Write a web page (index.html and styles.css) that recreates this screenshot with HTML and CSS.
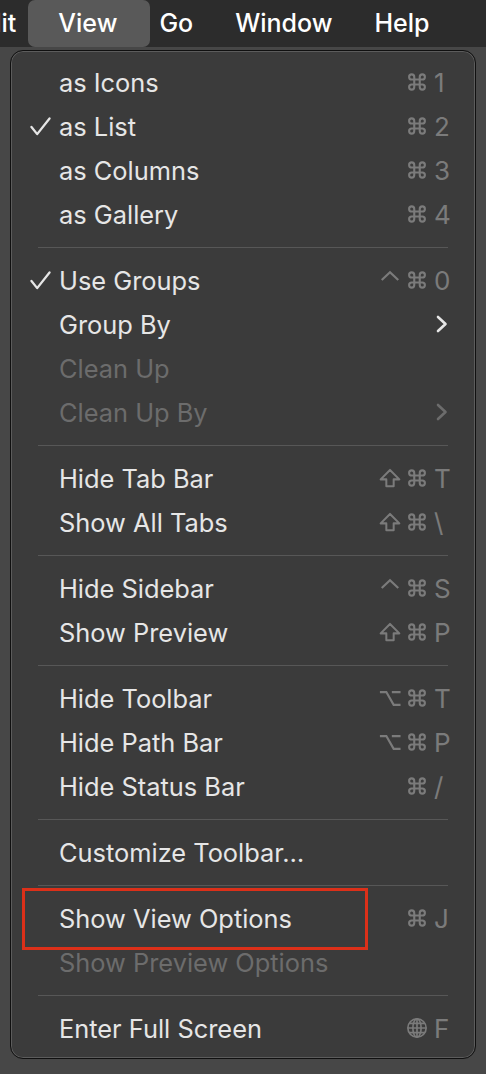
FILE: index.html
```html
<!DOCTYPE html>
<html>
<head>
<meta charset="utf-8">
<link rel="stylesheet" href="styles.css">
</head>
<body>
<svg width="0" height="0" class="defs">
  <defs>
    <symbol id="cmd" viewBox="0 0 24 24"><path d="M15 6.5v11a2.8 2.8 0 1 0 2.8-2.8H6.2a2.8 2.8 0 1 0 2.8 2.8V6.5a2.8 2.8 0 1 0-2.8 2.8h11.6a2.8 2.8 0 1 0-2.8-2.8" fill="none" stroke="currentColor" stroke-width="2.3"/></symbol>
    <symbol id="shift" viewBox="0 0 24 24"><path d="M8 21v-7.5H1.8L12 3.2l10.2 10.3H16V21z" fill="none" stroke="currentColor" stroke-width="2.2" stroke-linejoin="round"/></symbol>
    <symbol id="ctrl" viewBox="0 0 24 24"><polyline points="3,12 12,3.5 21,12" fill="none" stroke="currentColor" stroke-width="2.4"/></symbol>
    <symbol id="opt" viewBox="0 0 24 24"><path d="M1 5.5h7l8 14h7.5M14 5.5h9.5" fill="none" stroke="currentColor" stroke-width="2.4"/></symbol>
    <symbol id="globe" viewBox="0 0 24 24"><g fill="none" stroke="currentColor" stroke-width="1.8"><circle cx="12" cy="12" r="10"/><ellipse cx="12" cy="12" rx="4.5" ry="10"/><path d="M12 2v20M2 12h20M3.5 7h17M3.5 17h17"/></g></symbol>
  </defs>
</svg>

<div class="menubar">
  <span class="mb-item mb-edit">Edit</span>
  <span class="mb-item mb-active">View</span>
  <span class="mb-item">Go</span>
  <span class="mb-item">Window</span>
  <span class="mb-item">Help</span>
</div>

<div class="menu">
  <div class="item"><span class="label">as Icons</span><span class="sc"><span class="slot"></span><span class="slot"><svg class="ic"><use href="#cmd"/></svg></span><span class="key">1</span></span></div>
  <div class="item"><svg class="check" viewBox="0 0 22 20"><polyline points="1.5,10.5 7.5,18 20.5,1.5"/></svg><span class="label">as List</span><span class="sc"><span class="slot"></span><span class="slot"><svg class="ic"><use href="#cmd"/></svg></span><span class="key">2</span></span></div>
  <div class="item"><span class="label">as Columns</span><span class="sc"><span class="slot"></span><span class="slot"><svg class="ic"><use href="#cmd"/></svg></span><span class="key">3</span></span></div>
  <div class="item"><span class="label">as Gallery</span><span class="sc"><span class="slot"></span><span class="slot"><svg class="ic"><use href="#cmd"/></svg></span><span class="key">4</span></span></div>
  <div class="sep"></div>
  <div class="item"><svg class="check" viewBox="0 0 22 20"><polyline points="1.5,10.5 7.5,18 20.5,1.5"/></svg><span class="label">Use Groups</span><span class="sc"><span class="slot"><svg class="ic"><use href="#ctrl"/></svg></span><span class="slot"><svg class="ic"><use href="#cmd"/></svg></span><span class="key">0</span></span></div>
  <div class="item"><span class="label">Group By</span><svg class="chev" viewBox="0 0 12 18"><polyline points="2,2 9.5,9 2,16"/></svg></div>
  <div class="item disabled"><span class="label">Clean Up</span></div>
  <div class="item disabled"><span class="label">Clean Up By</span><svg class="chev" viewBox="0 0 12 18"><polyline points="2,2 9.5,9 2,16"/></svg></div>
  <div class="sep"></div>
  <div class="item"><span class="label">Hide Tab Bar</span><span class="sc"><span class="slot"><svg class="ic"><use href="#shift"/></svg></span><span class="slot"><svg class="ic"><use href="#cmd"/></svg></span><span class="key">T</span></span></div>
  <div class="item"><span class="label">Show All Tabs</span><span class="sc"><span class="slot"><svg class="ic"><use href="#shift"/></svg></span><span class="slot"><svg class="ic"><use href="#cmd"/></svg></span><span class="key">\</span></span></div>
  <div class="sep"></div>
  <div class="item"><span class="label">Hide Sidebar</span><span class="sc"><span class="slot"><svg class="ic"><use href="#ctrl"/></svg></span><span class="slot"><svg class="ic"><use href="#cmd"/></svg></span><span class="key">S</span></span></div>
  <div class="item"><span class="label">Show Preview</span><span class="sc"><span class="slot"><svg class="ic"><use href="#shift"/></svg></span><span class="slot"><svg class="ic"><use href="#cmd"/></svg></span><span class="key">P</span></span></div>
  <div class="sep"></div>
  <div class="item"><span class="label">Hide Toolbar</span><span class="sc"><span class="slot"><svg class="ic"><use href="#opt"/></svg></span><span class="slot"><svg class="ic"><use href="#cmd"/></svg></span><span class="key">T</span></span></div>
  <div class="item"><span class="label">Hide Path Bar</span><span class="sc"><span class="slot"><svg class="ic"><use href="#opt"/></svg></span><span class="slot"><svg class="ic"><use href="#cmd"/></svg></span><span class="key">P</span></span></div>
  <div class="item"><span class="label">Hide Status Bar</span><span class="sc"><span class="slot"></span><span class="slot"><svg class="ic"><use href="#cmd"/></svg></span><span class="key">/</span></span></div>
  <div class="sep"></div>
  <div class="item"><span class="label">Customize Toolbar…</span></div>
  <div class="sep"></div>
  <div class="item highlight"><span class="label">Show View Options</span><span class="sc"><span class="slot"></span><span class="slot"><svg class="ic"><use href="#cmd"/></svg></span><span class="key">J</span></span></div>
  <div class="item disabled"><span class="label">Show Preview Options</span></div>
  <div class="sep"></div>
  <div class="item"><span class="label">Enter Full Screen</span><span class="sc"><span class="slot"></span><span class="slot"><svg class="ic"><use href="#globe"/></svg></span><span class="key">F</span></span></div>
</div>
</body>
</html>
```

FILE: styles.css
```css
*, *::before, *::after { box-sizing: border-box; }
html, body {
  margin: 0;
  padding: 0;
  background: #474747;
  overflow: hidden;
  font-family: Inter, "Noto Sans", sans-serif;
}
.defs { position: absolute; }

.menubar {
  height: 47px;
  background: #2c2c2c;
  display: flex;
  align-items: center;
  gap: 42px;
  color: #ffffff;
  font-size: 25px;
  font-weight: 500;
  white-space: nowrap;
}
.mb-item { position: relative; line-height: 47px; }
.mb-edit { margin-left: -29px; }
.mb-active::before {
  content: "";
  position: absolute;
  left: -30px;
  right: -33px;
  top: 0;
  bottom: 0;
  background: #595959;
  border-radius: 7px;
  z-index: -1;
}
.mb-active { z-index: 0; }

.menu {
  margin: 3px 0 0 10px;
  width: 466px;
  background: #3b3b3b;
  border: 1px solid #101010;
  border-radius: 13px;
  box-shadow: inset 0 0 0 1px #5c5c5c;
  padding: 10px 0 7px;
  color: #e6e6e6;
  font-size: 25.4px;
}
.item {
  position: relative;
  height: 44px;
  display: flex;
  align-items: center;
  padding: 0 26px 2px 48px;
}
.label { flex: 1; white-space: nowrap; }
.disabled { color: #6c6c6c; }

.check {
  position: absolute;
  left: 19px;
  top: 12px;
  width: 21px;
  height: 19px;
  fill: none;
  stroke: #e6e6e6;
  stroke-width: 2.4;
  stroke-linecap: round;
  stroke-linejoin: round;
}

.sc {
  display: flex;
  align-items: center;
  color: #7b7b7b;
  font-size: 26px;
}
.slot {
  width: 27px;
  height: 22px;
  display: flex;
  align-items: center;
  justify-content: center;
}
.ic { width: 22px; height: 22px; }
.key {
  width: 19px;
  padding-left: 4px;
  text-align: left;
}

.chev {
  width: 12px;
  height: 18px;
  margin-right: 1px;
  fill: none;
  stroke: #e6e6e6;
  stroke-width: 2.6;
  stroke-linecap: round;
  stroke-linejoin: round;
}
.disabled .chev { stroke: #6c6c6c; }

.sep {
  height: 1px;
  margin: 10px 27px 11px 27px;
  background: #575757;
}

.highlight::after {
  content: "";
  position: absolute;
  left: 11px;
  top: -9px;
  width: 346px;
  height: 62px;
  border: 3.5px solid #dc3019;
}
```
